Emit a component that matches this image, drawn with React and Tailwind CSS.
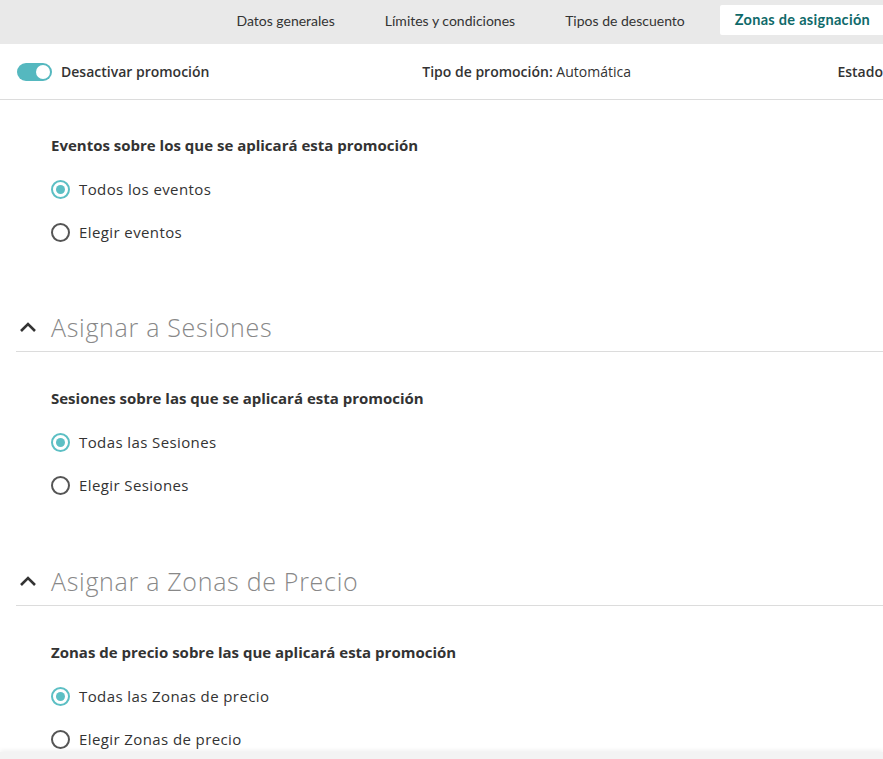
import React from "react";

const lato = { fontFamily: "Lato, 'Noto Sans', sans-serif" };
const open = { fontFamily: "'Open Sans', 'Noto Sans', sans-serif" };

function Radio({ checked, label }) {
  return (
    <div className="flex items-center h-[20px]">
      {checked ? (
        <span className="w-[19px] h-[19px] rounded-full border-2 border-[#5cbfc4] flex items-center justify-center">
          <span className="w-[9px] h-[9px] rounded-full bg-[#5cbfc4]" />
        </span>
      ) : (
        <span className="w-[19px] h-[19px] rounded-full border-2 border-[#555]" />
      )}
      <span className="ml-[9px] text-[15px] leading-[20px] tracking-[0.4px] text-[#333]">{label}</span>
    </div>
  );
}

function Block({ title, a, b }) {
  return (
    <div className="pl-[51px]">
      <div className="text-[15px] font-bold text-[#333] h-[20px] leading-[20px]">{title}</div>
      <div className="mt-[24px] flex flex-col gap-[23px]">
        <Radio checked label={a} />
        <Radio label={b} />
      </div>
    </div>
  );
}

function Section({ title, children }) {
  return (
    <div>
      <div className="flex items-center h-[49px] border-b border-[#dcdcdc] ml-[16px]">
        <svg width="18" height="12" viewBox="0 0 18 12" className="ml-[3px]">
          <path d="M2 10 L9 3 L16 10" fill="none" stroke="#333" strokeWidth="2.6" />
        </svg>
        <span className="ml-[14px] text-[25px] leading-[32px] tracking-[0.7px] font-light text-[#888]">{title}</span>
      </div>
      <div className="pt-[36px]">{children}</div>
    </div>
  );
}

export default function App() {
  return (
    <div className="w-[883px] h-[759px] overflow-hidden bg-white relative" style={open}>
      <div className="h-[44px] bg-[#e9e9e9] flex items-start justify-end overflow-hidden" style={lato}>
        <div className="flex items-center gap-[20px] mt-[5px] mr-[-2px]">
          <div className="px-[15px] h-[30px] flex items-center text-[14px] text-[#333]">Datos generales</div>
          <div className="px-[15px] h-[30px] flex items-center text-[14px] text-[#333]">Límites y condiciones</div>
          <div className="px-[15px] h-[30px] flex items-center text-[14px] text-[#333]">Tipos de descuento</div>
          <div className="px-[15px] h-[30px] flex items-center text-[14.5px] font-bold tracking-[0.3px] text-[#0f6a6a] bg-white rounded-[2px]">Zonas de asignación</div>
        </div>
      </div>
      <div className="h-[56px] border-b border-[#dcdcdc] flex items-center pl-[17px] whitespace-nowrap">
        <div className="w-[409px] flex items-center">
          <div className="w-[35px] h-[18px] rounded-full bg-[#55b8bf] relative">
            <span className="absolute right-[2px] top-[2px] w-[14px] h-[14px] rounded-full bg-white" />
          </div>
          <span className="ml-[9px] text-[14px] font-semibold text-[#333]">Desactivar promoción</span>
        </div>
        <span className="w-[419px] text-[14px] text-[#333]"><span className="font-semibold">Tipo de promoción:</span> Automática</span>
        <span className="text-[14px] font-semibold text-[#333]">Estado</span>
      </div>
      <div className="pt-[35px]">
        <Block title="Eventos sobre los que se aplicará esta promoción" a="Todos los eventos" b="Elegir eventos" />
        <div className="mt-[61px]">
          <Section title="Asignar a Sesiones">
            <Block title="Sesiones sobre las que se aplicará esta promoción" a="Todas las Sesiones" b="Elegir Sesiones" />
          </Section>
        </div>
        <div className="mt-[62px]">
          <Section title="Asignar a Zonas de Precio">
            <Block title="Zonas de precio sobre las que aplicará esta promoción" a="Todas las Zonas de precio" b="Elegir Zonas de precio" />
          </Section>
        </div>
      </div>
      <div className="absolute left-0 right-0 bottom-0 h-[7px] bg-[#f3f3f3] shadow-[0_-2px_4px_rgba(0,0,0,0.06)]" />
    </div>
  );
}
